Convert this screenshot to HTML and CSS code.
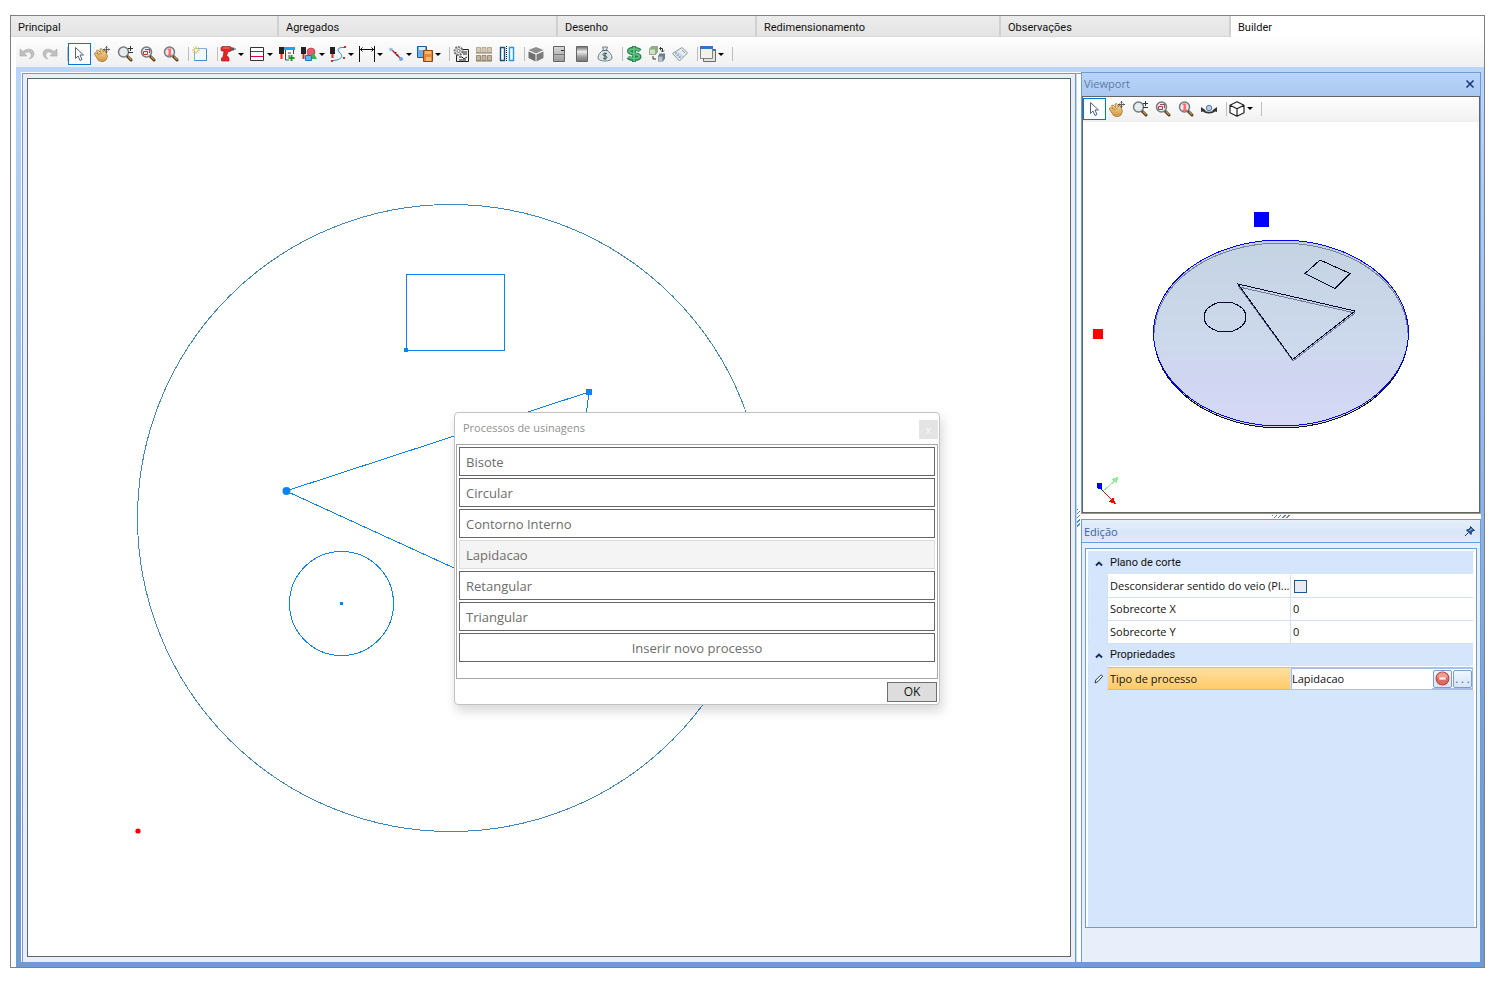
FILE: index.html
```
<!DOCTYPE html>
<html lang="pt-BR">
<head>
<meta charset="utf-8">
<title>Builder</title>
<link rel="stylesheet" href="styles.css">
</head>
<body>
<svg class="defs" aria-hidden="true">
  <defs>
    <linearGradient id="wood" x1="0" y1="0" x2="0" y2="1"><stop offset="0" stop-color="#fbe0a4"/><stop offset="1" stop-color="#cf923c"/></linearGradient>
    <linearGradient id="steel" x1="0" y1="0" x2="0" y2="1"><stop offset="0" stop-color="#666"/><stop offset=".35" stop-color="#eee"/><stop offset=".7" stop-color="#999"/><stop offset="1" stop-color="#777"/></linearGradient>
    <linearGradient id="door" x1="0" y1="0" x2="0" y2="1"><stop offset="0" stop-color="#d8d8d8"/><stop offset="1" stop-color="#9a9a9a"/></linearGradient>
    <linearGradient id="glass" x1="0" y1="0" x2="0" y2="1"><stop offset="0" stop-color="#c4d3e2"/><stop offset=".55" stop-color="#ccd9ec"/><stop offset=".75" stop-color="#d0d6f1"/><stop offset="1" stop-color="#d5d9f5"/></linearGradient>
    <symbol id="i-undo" viewBox="0 0 16 16"><path d="M1 3v7h7L5.600 7.600C8 5.500 11 5.500 12 8c.8 2-.5 4-2 5 3-.5 5-2.500 5-5.500C15 3 9 1.500 4 5.500z" fill="#c0c0c0" stroke="#a9a9a9" stroke-width=".6"/></symbol>
    <symbol id="i-arrow" viewBox="0 0 16 16"><path d="M4.500 1.500v11l2.500-2.500 2 4.500 2-1-2-4.500h3.500z" fill="#fff" stroke="#55617e"/></symbol>
    <symbol id="i-hand" viewBox="0 0 16 16"><path d="M0 7.500L2 6.500l2 1.500-1.500-3.500L4 4l2.500 2.500L6 3l1.500-.5L9.500 6l.5-2 1.500.5 2 6-1.500 3.500-3.500 2-4-1.500z" fill="url(#wood)" stroke="#9a6a20" stroke-width=".7"/><path d="M4 9l2-1M6.500 8l2-1" stroke="#9a6a20" stroke-width=".6"/><path d="M12.500 0v7M9 3.500h7M11.500 1.500l1-1 1 1M11.500 5.500l1 1 1-1M10.500 2.500l-1 1 1 1M14.500 2.500l1 1-1 1" fill="none" stroke="#444" stroke-width=".8"/></symbol>
    <symbol id="i-lens" viewBox="0 0 16 16"><path d="M10 10l4 4" stroke="#54391a" stroke-width="3" stroke-linecap="round"/><path d="M11 10.500l3.300 3.300" stroke="#c39a5a" stroke-width="1.100"/><circle cx="6.500" cy="6" r="5" fill="#e3ecf1" stroke="#77797b" stroke-width="1.500"/></symbol>
    <symbol id="i-zoompm" viewBox="0 0 16 16"><use href="#i-lens"/><path d="M13.500 0v5M11 2.500h5M11 6.500h5" stroke="#333"/></symbol>
    <symbol id="i-zoomrect" viewBox="0 0 16 16"><use href="#i-lens"/><path d="M3.500 5.500h4v3h-4z" fill="none" stroke="#b23c44"/><path d="M5 3.500h4.500V7" fill="none" stroke="#8d4b55"/></symbol>
    <symbol id="i-zoomone" viewBox="0 0 16 16"><use href="#i-lens"/><path d="M4.500 2.500h3.500v6h1v1.500H4.500V8.500h1V4h-1z" fill="#fb6d6d"/></symbol>
    <symbol id="i-cube" viewBox="0 0 16 16"><path d="M8 .8l7 3.400v7.600l-7 3.400-7-3.400V4.200zM1 4.200l7 3.600 7-3.600M8 7.800v7.400" fill="#fff" stroke="#222" stroke-width="1.200" stroke-linejoin="round"/></symbol>
  </defs>
</svg>

<div class="window">
  <nav class="tabs" role="tablist">
    <button class="tab" role="tab">Principal</button>
    <button class="tab" role="tab">Agregados</button>
    <button class="tab" role="tab">Desenho</button>
    <button class="tab" role="tab">Redimensionamento</button>
    <button class="tab" role="tab">Observações</button>
    <button class="tab active" role="tab" aria-selected="true">Builder</button>
  </nav>

  <div class="toolbar" role="toolbar">
    <button class="tool" aria-label="Desfazer"><svg><use href="#i-undo"/></svg></button>
    <button class="tool flip" aria-label="Refazer"><svg><use href="#i-undo"/></svg></button>
    <span class="sep"></span>
    <button class="tool selected" aria-label="Selecionar"><svg><use href="#i-arrow"/></svg></button>
    <button class="tool" aria-label="Mover"><svg><use href="#i-hand"/></svg></button>
    <button class="tool" aria-label="Zoom"><svg><use href="#i-zoompm"/></svg></button>
    <button class="tool" aria-label="Zoom em janela"><svg><use href="#i-zoomrect"/></svg></button>
    <button class="tool" aria-label="Zoom total"><svg><use href="#i-zoomone"/></svg></button>
    <span class="sep"></span>
    <button class="tool" aria-label="Novo"><svg viewBox="0 0 16 16"><path d="M2.500 2.500h12v12h-12z" fill="#f2f8ff" stroke="#7fb2e2"/><path d="M14.500 3v11.500h-12" fill="none" stroke="#3c8adb"/><path d="M4 0v8M0 4h8M1.300 1.300l5.400 5.400M6.700 1.300L1.300 6.700" stroke="#dcbb50"/><circle cx="4" cy="4" r="1.500" fill="#fff6c0"/></svg></button>
    <span class="sep"></span>
    <button class="tool drop" aria-label="Furação"><svg viewBox="0 0 16 16"><path d="M2 .5h8l1.500 1v3l-1.500 1H8l-1.500 5H8l1 1.500v3H1.500v-3L3 11l1-5.500-3-1v-3z" fill="#e52424" stroke="#9b1313" stroke-width=".6"/><path d="M2.500 2h7" stroke="#ff7a70"/><path d="M11.500 1.500H14v3h-2.500zM14 2.500h2v1h-2z" fill="#555"/></svg></button>
    <button class="tool drop" aria-label="Divisões"><svg viewBox="0 0 16 16"><path d="M1.500 1.500h13v13h-13z" fill="#fff" stroke="#333"/><path d="M2 5.500h12M2 10.500h12" stroke="#e00050"/></svg></button>
    <button class="tool" aria-label="Adicionar usinagem"><svg viewBox="0 0 16 16"><path d="M0 1h5v7H0z" fill="#222"/><path d="M1.500 8h2v5h-2z" fill="#e22"/><path d="M5 1h11v3H5z" fill="#19a5f0"/><path d="M6.500 4v10H10M14.500 4v4M9 7h3M9 10h2" fill="none" stroke="#444"/><path d="M12.500 9v6M9.500 12h6" stroke="#189c20" stroke-width="2"/></svg></button>
    <button class="tool drop shapes" aria-label="Formas"><svg viewBox="0 0 16 16"><circle cx="10" cy="6" r="4" fill="#ef5868" stroke="#b52a3a" stroke-width=".6"/><path d="M12 6l4 7H9z" fill="#38b24a"/><path d="M4.500 9.500h6v5h-6z" fill="#68b8f8" stroke="#2472c8"/><path d="M0 1h5v7H0z" fill="#222"/><path d="M1.500 8h2v5h-2z" fill="#e22"/></svg></button>
    <button class="tool drop" aria-label="Curva"><svg viewBox="0 0 16 16"><path d="M0 1h5v7H0z" fill="#222"/><path d="M1.500 8h2v4h-2z" fill="#e22"/><path d="M14 1.500C7 1 7 4.500 10 7s3 7-7.500 7.500" fill="none" stroke="#178cea"/><path d="M14 0h2v2h-2zM13 11h2v2h-2zM1 14h2v2H1z" fill="#e22"/></svg></button>
    <button class="tool drop" aria-label="Cota"><svg viewBox="0 0 16 16"><path d="M.5 0v16M15.500 0v16M1 3.500h14M3.500 1.500l-2 2 2 2M12.500 1.500l2 2-2 2" fill="none" stroke="#111"/></svg></button>
    <button class="tool drop" aria-label="Linha"><svg viewBox="0 0 16 16"><path d="M4 4l8 8" stroke="#d02030" stroke-width="1.500"/><path d="M7 6.500h1.500M8 9h2.500" stroke="#333"/><circle cx="3" cy="3.500" r="1.800" fill="#8dbcf5"/><circle cx="13" cy="13" r="2" fill="#6da5ee"/></svg></button>
    <button class="tool drop" aria-label="Copiar"><svg viewBox="0 0 16 16"><path d="M.5.5h9v11h-9z" fill="#6aaeea" stroke="#1c5d9e"/><path d="M2 1h6v3H2z" fill="#dceefc"/><path d="M6.500 4.500h9v11h-9z" fill="#e08a3a" stroke="#8b4812"/><path d="M8 5h6v3H8zM9 11h5v4H9z" fill="#f3b87a"/></svg></button>
    <span class="sep"></span>
    <button class="tool" aria-label="Configurações"><svg viewBox="0 0 16 16"><path d="M3.500 3.500h12v12h-12z" fill="#eee" stroke="#222"/><path d="M9 6h5M10 8h4M6 11h3l2 2 3-2M6 14h7" fill="none" stroke="#222"/><circle cx="5.500" cy="5" r="4" fill="#ddd" stroke="#777" stroke-dasharray="2 1" stroke-width="2"/><circle cx="5.500" cy="5" r="1.500" fill="#fff" stroke="#777"/></svg></button>
    <button class="tool" aria-label="Materiais"><svg viewBox="0 0 16 16"><path d="M.5 1.500h4v5h-4zM6 1.500h4v5H6zM11.500 1.500h4v5h-4z" fill="#d4c9b5" stroke="#b9ad98"/><path d="M.5 9.500h4v5h-4zM6 9.500h4v5H6zM11.500 9.500h4v5h-4z" fill="#c2b49c" stroke="#9a8c75"/><path d="M0 7h16M0 15h16" stroke="#8a7b64"/></svg></button>
    <button class="tool" aria-label="Espelhar"><svg viewBox="0 0 16 16"><path d="M1.500 1.500h4v13h-4z" fill="#fff" stroke="#15507c" stroke-width="1.400"/><path d="M10.500 1.500h4v13h-4z" fill="#fff" stroke="#1c96ee" stroke-width="1.400"/><path d="M7.500 0v16" stroke="#111" stroke-dasharray="1 1"/></svg></button>
    <span class="sep"></span>
    <button class="tool" aria-label="Módulo"><svg viewBox="0 0 16 16"><path d="M8 1l7.500 3L8 7.500.5 4z" fill="#8d8d8d"/><path d="M.5 5.500L7.500 8.500V15.500L.5 12z" fill="#6f6f6f"/><path d="M15.500 5.500L8.500 8.500V15.500l7-3.500z" fill="#7c7c7c"/></svg></button>
    <button class="tool" aria-label="Porta"><svg viewBox="0 0 16 16"><path d="M2.500.5h11v15h-11z" fill="url(#door)" stroke="#666"/><path d="M3 8.500h10" stroke="#777"/><path d="M10 4h3v1h-3z" fill="#333"/></svg></button>
    <button class="tool" aria-label="Perfil"><svg viewBox="0 0 16 16"><path d="M2.500.5h11v15h-11z" fill="url(#steel)" stroke="#666"/></svg></button>
    <button class="tool" aria-label="Custo"><svg viewBox="0 0 16 16"><path d="M5.500 1h5L9.500 4C13 6 15 9 15 12c0 4-14 4-14 0 0-3 2-6 5.500-8z" fill="#dbe5e7" stroke="#718287"/><path d="M5 4.500h6" stroke="#60747a"/><path d="M10 8c-1-1-4-1-4 .7 0 1.600 4 .8 4 2.600C10 13 7 13 6 12M8 6.500v7.500" fill="none" stroke="#375057"/></svg></button>
    <span class="sep"></span>
    <button class="tool" aria-label="Preço"><svg viewBox="0 0 16 16"><path d="M14 4.800C11.500 2.200 3 2 3 5.300c0 3.400 10.500 1.900 10.500 5.200 0 3.500-9 3-11.500.7M8 0v16" fill="none" stroke="#2c7f4d" stroke-width="4"/><path d="M13.500 4.600C11 2.400 3.200 2.500 3.200 5.300c0 3 10 2 10 5.200 0 2.700-8 2.500-10.700.5M8 .8v14.400" fill="none" stroke="#5cc07e" stroke-width="2"/></svg></button>
    <button class="tool" aria-label="Trocar módulo"><svg viewBox="0 0 16 16"><path d="M.5 3L2.500.5h6v5.500l-2 2.500h-6z" fill="#8fae82" stroke="#7d9673" stroke-width=".7"/><path d="M1 3.500h5v4.500H1z" fill="#cfe2c5"/><path d="M9 10l1.500-2.500H16v5L14 15.500H9z" fill="#6d7e8c"/><path d="M9.500 10.500h4V15h-4z" fill="#b4c2cd"/><path d="M11 2.500h2.500v3M12 1l-1.500 1.500L12 4M12 4.500L13.500 6 15 4.500M4 10v3h3" fill="none" stroke="#333"/></svg></button>
    <button class="tool" aria-label="Etiqueta"><svg viewBox="0 0 16 16"><path d="M.5 7.500L10 1.500l5.500 5.500-8 8z" fill="#e5eaf0" stroke="#8e989f"/><path d="M5.500 6.500l5.500 4.500M3.500 8.500l5 4" stroke="#b4bec6"/><path d="M3.500 7.500l1-1M5.500 9.500l1-1M7.500 11.500l1-1" stroke="#4e94d8" stroke-width="1.500"/><path d="M10 4l3 3" stroke="#9aa8b2"/></svg></button>
    <span class="sep"></span>
    <button class="tool drop" aria-label="Janelas"><svg viewBox="0 0 16 16"><path d="M3.500 3.500h12v12h-12z" fill="#e5e5de" stroke="#6b6b6b"/><path d="M.5.500h12v12H.5z" fill="#f1f1ed" stroke="#7c838a"/><path d="M0 0h13v3H0zM13 3h3v2h-3z" fill="#3d70bd"/></svg></button>
    <span class="sep"></span>
  </div>

  <main class="workspace">
    <div class="docks">
      <section class="dock">
        <div class="canvas">
          <svg class="drawing" aria-label="Desenho da peça">
            <g fill="none" shape-rendering="crispEdges">
              <circle cx="423" cy="439" r="313.500" stroke="#3f86bd"/>
              <g stroke="#0a84f5">
                <path d="M378.500 195.500h98v76h-98z"/>
                <path d="M561 313L258 412l275 126z"/>
                <circle cx="313.500" cy="524.500" r="52"/>
              </g>
              <path d="M558 310h6v6h-6zM376 269h4v4h-4zM312 523h3v3h-3z" fill="#0a84f5"/>
            </g>
            <circle cx="258.500" cy="412" r="4" fill="#0a84f5"/>
            <circle cx="110" cy="752" r="2.600" fill="#f0000c"/>
          </svg>

          <div class="dialog" role="dialog" aria-labelledby="dlg-title">
            <header class="dialog-head">
              <h2 class="dialog-title" id="dlg-title">Processos de usinagens</h2>
              <button class="dialog-close" aria-label="Fechar">x</button>
            </header>
            <div class="process-list">
              <button class="process">Bisote</button>
              <button class="process">Circular</button>
              <button class="process">Contorno Interno</button>
              <button class="process current">Lapidacao</button>
              <button class="process">Retangular</button>
              <button class="process">Triangular</button>
              <button class="process insert">Inserir novo processo</button>
            </div>
            <footer class="dialog-foot"><button class="ok">OK</button></footer>
          </div>
        </div>
      </section>

      <div class="splitter"><span class="grip grip-v"></span></div>

      <aside class="sidebar">
        <section class="panel">
          <header class="panel-head active">
            <h2>Viewport</h2>
            <button class="head-btn" aria-label="Fechar"><svg class="glyph" viewBox="0 0 10 10"><path d="M1.500 1.500l7 7M8.500 1.500l-7 7" stroke="#173a78" stroke-width="1.600"/></svg></button>
          </header>
          <div class="viewport">
            <div class="toolbar mini" role="toolbar">
              <button class="tool selected" aria-label="Selecionar"><svg><use href="#i-arrow"/></svg></button>
              <button class="tool" aria-label="Mover"><svg><use href="#i-hand"/></svg></button>
              <button class="tool" aria-label="Zoom"><svg><use href="#i-zoompm"/></svg></button>
              <button class="tool" aria-label="Zoom em janela"><svg><use href="#i-zoomrect"/></svg></button>
              <button class="tool" aria-label="Zoom total"><svg><use href="#i-zoomone"/></svg></button>
              <button class="tool" aria-label="Orbitar"><svg viewBox="0 0 16 16"><path d="M2 9c2 3.500 10 3.500 12 0" fill="none" stroke="#333" stroke-width="1.600"/><path d="M0 11V6l5 3.500zM16 11V6l-5 3.500z" fill="#333"/><circle cx="8" cy="7" r="2.700" fill="#b9d2ec" stroke="#55789e"/></svg></button>
              <span class="sep"></span>
              <button class="tool drop" aria-label="Vista"><svg><use href="#i-cube"/></svg></button>
              <span class="sep"></span>
            </div>
            <svg class="scene" aria-label="Vista 3D">
              <g fill="none" shape-rendering="crispEdges">
                <ellipse cx="198" cy="213" rx="127" ry="93" fill="#d4d9dc" stroke="#111"/>
                <ellipse cx="198" cy="211" rx="127" ry="93" fill="url(#glass)"/>
                <path d="M71.500 211A126.500 90 0 0 1 324.500 211" stroke="#74809c"/>
                <ellipse cx="198" cy="211" rx="127.500" ry="93" stroke="#00f"/>
                <path d="M156 165l116 26-62 48z" stroke="#717b98"/>
                <g stroke="#08082c">
                  <path d="M155 162l117 27-62.500 48.500z"/>
                  <path d="M237 138l30 13.500-15 15L222 151.500z"/>
                  <ellipse cx="142" cy="195" rx="21" ry="15"/>
                </g>
                <path d="M171 90h15v15h-15z" fill="#00f"/>
                <path d="M10 207h10v10H10z" fill="#f00"/>
                <path d="M20 369l13-11" stroke="#90ee90"/><path d="M35 355l-1 6-6-4z" fill="#90ee90"/>
                <path d="M16 364l4 5" stroke="#00f"/><path d="M14 361h5v5h-2v1h-2v-1h-1z" fill="#00f"/>
                <path d="M20 369l10 10" stroke="#f00"/><path d="M33 382l-7-2 4-5z" fill="#f00"/>
              </g>
            </svg>
          </div>
        </section>

        <div class="hsplit"><span class="grip grip-h"></span></div>

        <section class="panel edit">
          <header class="panel-head">
            <h2>Edição</h2>
            <button class="head-btn" aria-label="Fixar"><svg class="glyph" viewBox="0 0 10 10"><path d="M0 10l3.500-3.500" stroke="#173a78"/><path d="M1.500 4l2-.5L5.500 2l0-1.500 4 4H8L6.500 6.500 6 8.500z" fill="#2a5ba8" stroke="#173a78"/><path d="M4.500 5L7 2.500" stroke="#dce9fb"/></svg></button>
          </header>
          <div class="panel-body">
            <div class="grid-box">
              <table class="props">
                <colgroup><col class="c-mark"><col><col></colgroup>
                <tbody>
                  <tr class="cat"><td><svg class="chev" viewBox="0 0 8 6"><path d="M1 4.500L4 1.500l3 3" fill="none" stroke="#0f2d63" stroke-width="1.800"/></svg></td><th colspan="2">Plano de corte</th></tr>
                  <tr><td class="mark"></td><th><label for="veio">Desconsiderar sentido do veio (Pl...</label></th><td><input class="check" type="checkbox" id="veio"></td></tr>
                  <tr><td class="mark"></td><th>Sobrecorte X</th><td>0</td></tr>
                  <tr><td class="mark"></td><th>Sobrecorte Y</th><td>0</td></tr>
                  <tr class="cat"><td><svg class="chev" viewBox="0 0 8 6"><path d="M1 4.500L4 1.500l3 3" fill="none" stroke="#0f2d63" stroke-width="1.800"/></svg></td><th colspan="2">Propriedades</th></tr>
                  <tr class="editing"><td class="mark"><svg class="glyph" viewBox="0 0 10 10"><path d="M1 9l.8-3L6.500 1.300q1.300-.6 2.200.8L4 7.500z" fill="#fff" stroke="#22385f"/></svg></td><th><label for="tipo">Tipo de processo</label></th><td><div class="editor"><input class="value" id="tipo" type="text" value="Lapidacao"><button class="mini-btn" aria-label="Remover"><svg class="remove" viewBox="0 0 14 14"><circle cx="7" cy="7" r="6" fill="#e5675f" stroke="#b5463f"/><path d="M2 6a5 4.500 0 0 1 10 0z" fill="#f19a90"/><path d="M4 6h6v2H4z" fill="#fff"/></svg></button><button class="mini-btn">. . .</button></div></td></tr>
                </tbody>
              </table>
            </div>
          </div>
        </section>
      </aside>
    </div>
  </main>
</div>
</body>
</html>
```
FILE: styles.css
```
* { box-sizing: border-box; }

:root {
  --line: #6f9ad3;
  --pale: #e8effa;
  --fill: #d4e5fc;
  --ui: "Open Sans", "Noto Sans", sans-serif;
  --classic: Roboto, "Liberation Sans", sans-serif;
}

body {
  margin: 0;
  padding: 15px 10px 13px;
  height: 100vh;
  background: #fff;
  font-family: var(--ui);
  font-size: 11px;
  color: #111;
}

button, input { font: inherit; color: inherit; margin: 0; }
button { padding: 0; border: 0; background: none; }
h2 { margin: 0; font-weight: 400; }
.defs { position: absolute; width: 0; height: 0; }

.window {
  display: flex;
  flex-direction: column;
  height: 100%;
  border: 1px solid #808080;
}

/* Tabs */
.tabs {
  display: grid;
  flex: none;
  grid-template-columns: 268fr 279fr 199fr 244fr 230fr 253fr;
  height: 21px;
}
.tab {
  padding: 2px 7px 0;
  border-right: 2px solid #d0d0d0;
  border-bottom: 1px solid #d9d9d9;
  background: linear-gradient(#ececec, #e4e4e4);
  font-family: var(--classic);
  font-size: 11px;
  text-align: left;
}
.tab.active { background: #fff; border-right: 0; border-bottom-color: #fff; }

/* Toolbars */
.toolbar {
  display: flex;
  flex: none;
  align-items: center;
  height: 30px;
  margin-left: 5px;
  padding-top: 4px;
  background: linear-gradient(#fefefe, #f0f0f0);
}
.tool {
  display: flex;
  flex: none;
  align-items: center;
  width: 23px;
  height: 22px;
  padding-left: 3px;
}
.tool svg { width: 16px; height: 16px; flex: none; }
.tool.selected { border: 1px solid #0078d7; background: #fff; padding-left: 2px; }
.flip { transform: scaleX(-1); padding: 0 3px 0 4px; }
.tool.drop { width: 29px; gap: 2px; padding-left: 2px; }
.tool.drop::after {
  content: "";
  border: 3px solid transparent;
  border-top-color: #000;
  border-bottom: 0;
}
.sep { flex: none; width: 6px; height: 14px; border-right: 1px solid #bdbdbd; }

/* Docking area */
.workspace {
  flex: 1;
  min-height: 0;
  margin-left: 5px;
  padding: 5px 3px 5px 5px;
  background: linear-gradient(#bad6ff, #6f9ad3 85%);
}
.docks {
  display: grid;
  grid-template-columns: minmax(0, 1fr) 5px 400px;
  height: 100%;
  background: #fff;
}
.dock {
  margin: 1px 0 0 1px;
  padding: 4px 4px 5px;
  border: 1px solid var(--line);
  border-bottom: 0;
  background: var(--pale);
}
.canvas {
  position: relative;
  height: 100%;
  border: 1px solid #646464;
  background: #fff;
}
.drawing { display: block; width: 100%; height: 100%; }
.splitter {
  display: flex;
  flex-direction: column;
  justify-content: center;
  margin-top: 1px;
  border-left: 1px solid #bad6ff;
  border-top: 1px solid var(--line);
}
.grip { background: repeating-linear-gradient(135deg, #4f85c9 0 1px, transparent 1px 3px); }
.grip-v { width: 3px; height: 18px; }
.grip-h { width: 18px; height: 3px; }

/* Dialog floating over the drawing */
.dialog {
  position: absolute;
  left: 426px;
  top: 333px;
  width: 486px;
  border: 1px solid #c2c2c2;
  border-radius: 4px;
  background: #fff;
  box-shadow: 2px 6px 12px rgba(0, 0, 0, .16);
}
.dialog-head {
  display: flex;
  align-items: center;
  height: 31px;
  padding: 0 1px 0 8px;
}
.dialog-title { flex: 1; padding-bottom: 2px; font-size: 11px; color: #919191; }
.dialog-close {
  width: 19px;
  height: 19px;
  margin-top: 2px;
  background: #e4e4e4;
  color: #f8f8f8;
  line-height: 16px;
}
.process-list {
  display: flex;
  flex-direction: column;
  gap: 2px;
  height: 235px;
  margin: 0 1px;
  padding: 2px;
  border: 1px solid #a6a6ab;
}
.process {
  height: 29px;
  padding: 0 6px;
  border: 1px solid #666;
  background: #fff;
  color: #6d6d6d;
  font-size: 13px;
  text-align: left;
}
.process.current { border-color: #dcdcdc; background: #f4f4f4; }
.process.insert { text-align: center; }
.dialog-foot { display: flex; justify-content: flex-end; padding: 3px 2px 2px; }
.ok {
  width: 50px;
  height: 20px;
  border: 1px solid #707070;
  background: #ddd;
  font-size: 12px;
  line-height: 18px;
}

/* Sidebar */
.sidebar { display: flex; flex-direction: column; min-height: 0; }
.panel { flex: none; border: 1px solid var(--line); }
.panel-head {
  display: flex;
  align-items: center;
  justify-content: space-between;
  height: 23px;
  padding: 0 5px 0 2px;
  border-bottom: 1px solid var(--line);
  background: linear-gradient(#e6effb, #d7e6f8 60%, #dfeafa);
  color: #3c62a5;
}
.panel-head h2 { font-size: 11px; }
.panel-head.active {
  padding-bottom: 2px;
  border-bottom: 0;
  background: linear-gradient(#b9d4fa, #a9c8f0);
  color: #5f7ba5;
}
.head-btn { display: flex; }
.glyph { width: 10px; height: 10px; }
.viewport { border: 1px solid #646464; background: #fff; }
.mini { height: 25px; margin: 0; padding: 0 0 2px; }
.scene { display: block; width: 100%; height: 390px; }
.hsplit { display: flex; flex: none; align-items: center; justify-content: center; height: 5px; }
.edit { display: flex; flex: 1; flex-direction: column; border-bottom: 0; }
.edit .panel-head { height: 23px; }
.panel-body { flex: 1; padding: 5px 3px 34px; background: var(--pale); }
.grid-box {
  height: 100%;
  padding: 3px 2px 0;
  border: 1px solid var(--line);
  background: var(--fill);
  box-shadow: inset 2px 0 #fff, inset -2px 0 #fff, inset 0 2px #fff;
}

/* Property grid */
.props {
  width: 100%;
  table-layout: fixed;
  border-collapse: separate;
  border-spacing: 0;
  border-right: 1px solid #fff;
}
.c-mark { width: 19px; }
.props tr { height: 23px; }
.props td, .props th {
  height: 23px;
  padding: 0 0 0 2px;
  border-bottom: 1px solid #cfe0f7;
  border-left: 1px solid #cfe0f7;
  background: #fff;
  font-weight: 400;
  line-height: 20px;
  text-align: left;
  overflow: hidden;
  white-space: nowrap;
}
.props .cat td, .props .cat th {
  border-color: #fff;
  border-left-color: var(--fill);
  background: var(--fill);
}
.props .cat th { font-family: var(--classic); font-size: 11px; }
.props td.mark, .props .cat td { border-bottom-color: var(--fill); background: var(--fill); text-align: center; }
.chev { width: 8px; height: 6px; vertical-align: middle; }
.mark .glyph { vertical-align: middle; }
.check {
  display: block;
  appearance: none;
  width: 13px;
  height: 13px;
  margin-left: 1px;
  border: 1px solid #1f5391;
  background: #e9ebf3;
}
.props .editing th {
  border-top: 1px solid #f7b55b;
  border-bottom-color: #f7b55b;
  background: linear-gradient(#ffdf9f, #ffcb69);
}
.props .editing td:last-child { padding: 0; border-top: 1px solid #f7b55b; border-bottom-color: #f7b55b; }
.editor {
  display: flex;
  align-items: center;
  gap: 1px;
  height: 21px;
  border: 1px solid #a0c0e8;
}
.value { flex: 1; min-width: 0; padding: 0; border: 0; background: #fff; outline: 0; }
.mini-btn {
  display: flex;
  align-items: center;
  justify-content: center;
  width: 19px;
  height: 18px;
  border: 1px solid #7f9dc4;
  border-radius: 2px;
  background: linear-gradient(#eef5fe, #d6e5f8);
  color: #1f5aa8;
}
.remove { width: 15px; height: 15px; }
```
